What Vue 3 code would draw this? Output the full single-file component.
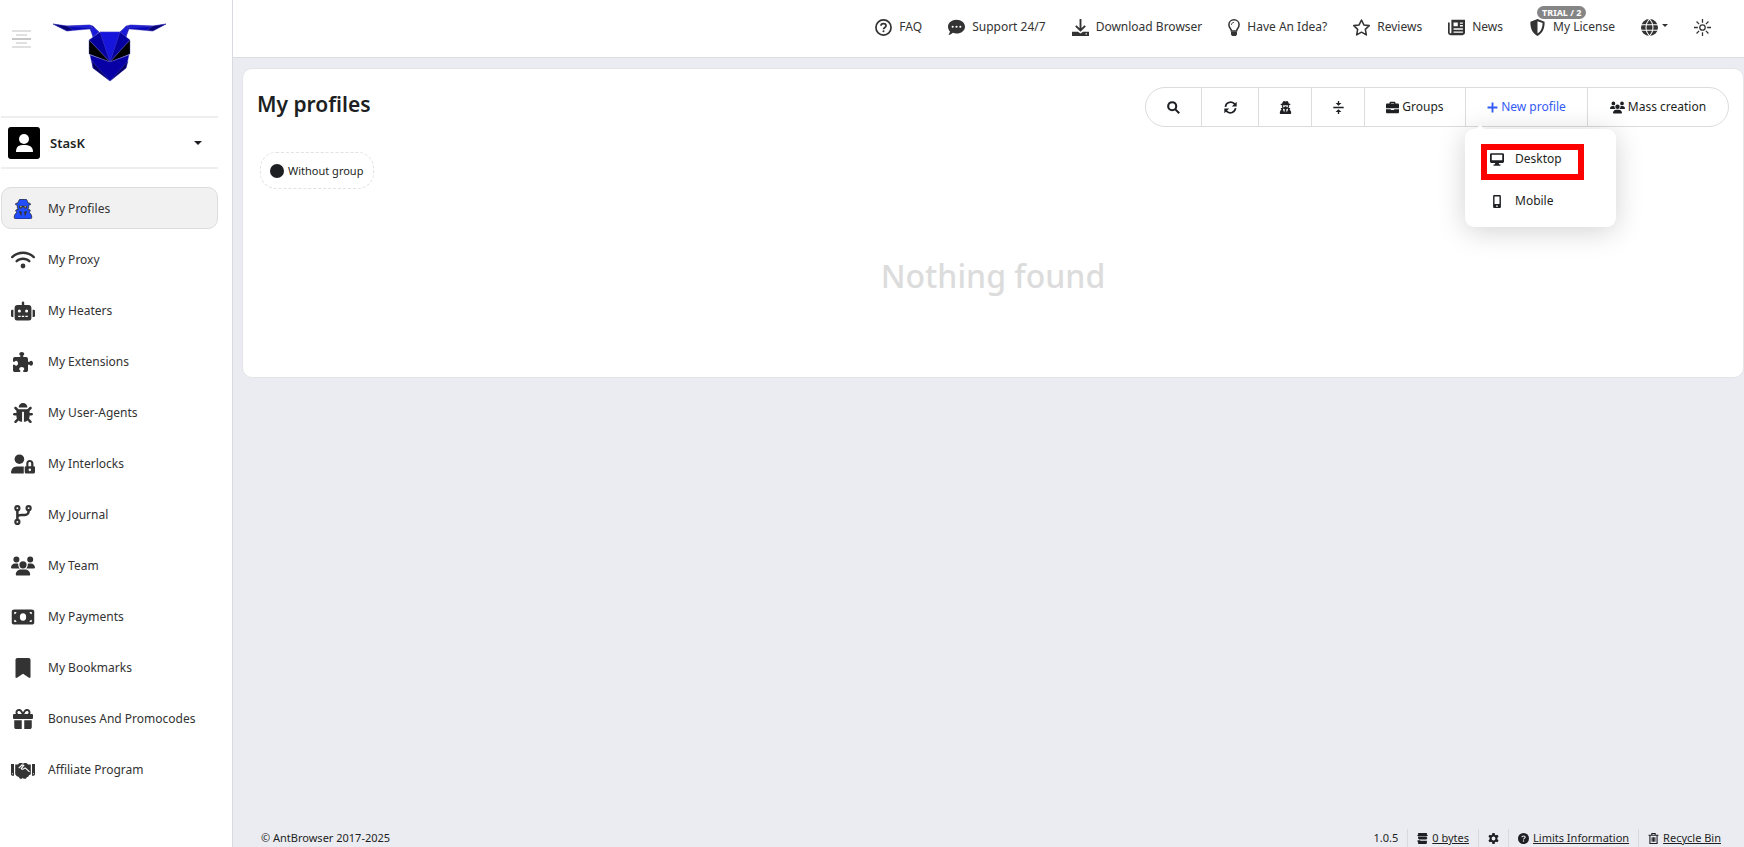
<script setup>
const icons = {
  wifi: ['0 0 640 512', '<path d="M54 203C123 137 217 96 320 96s197 41 266 107c13 12 33 12 45-1s12-33-1-45C550 80 440 32 320 32S90 80 10 157c-13 12-13 32-1 45s32 13 45 1zM320 256c57 0 109 21 148 56 13 12 34 10 45-3s10-33-2-45c-51-45-118-72-191-72s-140 27-191 72c-13 12-14 32-2 45s32 15 45 3c39-35 91-56 148-56zm64 160a64 64 0 1 0-128 0 64 64 0 1 0 128 0z"/>'],
  robot: ['0 0 640 512', '<path d="M32 224h32v192H32a32 32 0 0 1-32-32V256a32 32 0 0 1 32-32Zm512-48v272a64 64 0 0 1-64 64H160a64 64 0 0 1-64-64V176a80 80 0 0 1 80-80h112V32a32 32 0 0 1 64 0v64h112a80 80 0 0 1 80 80ZM264 256a40 40 0 1 0-40 40 40 40 0 0 0 40-40Zm-8 128h-64v32h64Zm96 0h-64v32h64Zm104-128a40 40 0 1 0-40 40 40 40 0 0 0 40-40Zm-8 128h-64v32h64Zm192-128v128a32 32 0 0 1-32 32h-32V224h32a32 32 0 0 1 32 32Z"/>'],
  puzzle: ['0 0 512 512', '<path d="M192 104.8c0-9.2-5.8-17.3-13.2-22.8C167.2 73.3 160 61.3 160 48c0-26.500 28.700-48 64-48s64 21.500 64 48c0 13.300-7.200 25.300-18.800 34c-7.400 5.500-13.200 13.600-13.200 22.800c0 12.800 10.400 23.200 23.200 23.200H336c26.500 0 48 21.500 48 48v56.800c0 12.800 10.400 23.200 23.200 23.200c9.200 0 17.300-5.800 22.800-13.200c8.700-11.600 20.700-18.800 34-18.800c26.500 0 48 28.700 48 64s-21.500 64-48 64c-13.300 0-25.300-7.200-34-18.800c-5.500-7.400-13.600-13.200-22.800-13.200c-12.800 0-23.200 10.400-23.200 23.200V464c0 26.500-21.500 48-48 48H279.200c-12.800 0-23.200-10.400-23.200-23.200c0-9.200 5.800-17.300 13.200-22.800c11.600-8.700 18.800-20.700 18.800-34c0-26.500-28.700-48-64-48s-64 21.500-64 48c0 13.300 7.200 25.300 18.800 34c7.400 5.500 13.200 13.600 13.200 22.800c0 12.800-10.400 23.200-23.200 23.200H48c-26.500 0-48-21.500-48-48V343.200C0 330.400 10.400 320 23.200 320c9.200 0 17.300 5.800 22.800 13.200C54.700 344.800 66.700 352 80 352c26.500 0 48-28.700 48-64s-21.500-64-48-64c-13.300 0-25.300 7.200-34 18.800C40.500 250.200 32.400 256 23.200 256C10.400 256 0 245.600 0 232.800V176c0-26.500 21.500-48 48-48H168.800c12.800 0 23.200-10.400 23.200-23.200z"/>'],
  bug: ['0 0 512 512', '<path d="M512 289c-1 17-15 31-33 31h-55v16c0 22-5 43-14 61l61 61c12 12 12 32 0 45s-33 12-46 0l-54-55c-25 20-57 32-91 32V236c0-7-5-12-12-12h-24c-7 0-12 5-12 12v244c-34 0-66-12-91-32l-54 55c-13 12-33 12-46 0s-12-33 0-45l61-61c-9-18-14-39-14-61v-16H33c-18 0-32-14-33-31 0-18 14-33 32-33h56v-59l-47-46c-12-13-12-33 0-46s33-12 46 0l54 55h230l54-55c13-12 33-12 46 0s12 33 0 46l-47 46v59h56c18 0 32 15 32 33zM257 0c-62 0-112 50-112 112h224C369 50 319 0 257 0z"/>'],
  lockuser: ['0 0 640 512', '<circle cx="224" cy="128" r="128"/><path d="M0 490c0-96 62-170 150-170h190v192H22c-12 0-22-8-22-22z"/><path fill-rule="evenodd" d="M500 150c-55 0-92 40-92 92v72c-26 0-42 12-42 38v120c0 24 16 40 40 40h194c24 0 40-16 40-40V352c0-26-16-38-42-38v-72c0-52-43-92-98-92zm-36 164v-72c0-24 14-38 36-38s38 14 38 38v72zm38 64a34 34 0 1 1 0 68 34 34 0 0 1 0-68z"/>'],
  branch: ['0 0 448 512', '<g fill="none" stroke="currentColor"><circle cx="80" cy="80" r="52" stroke-width="56"/><circle cx="368" cy="80" r="52" stroke-width="56"/><circle cx="80" cy="432" r="52" stroke-width="56"/><path stroke-width="64" d="M80 130v250M80 290c25-30 55-34 96-34h96c53 0 96-43 96-96v-30"/></g>'],
  team: ['0 0 640 512', '<path d="M144 0a80 80 0 1 1 0 160A80 80 0 1 1 144 0zM512 0a80 80 0 1 1 0 160A80 80 0 1 1 512 0zM0 299C0 240 48 192 107 192h42c16 0 31 4 45 10-1 7-2 14-2 22 0 38 17 73 43 96H21c-11 0-21-10-21-21zM405 320c26-23 43-58 43-96 0-8-1-15-2-22 14-6 29-10 45-10h42c59 0 107 48 107 107 0 11-10 21-21 21zM224 224a96 96 0 1 1 192 0 96 96 0 1 1-192 0zM128 485c0-73 60-133 133-133h118c73 0 133 60 133 133 0 15-12 27-27 27H155c-15 0-27-12-27-27z"/>'],
  money: ['0 0 576 512', '<path fill-rule="evenodd" d="M64 64C29 64 0 84 0 112v288c0 28 29 48 64 48h448c35 0 64-20 64-48V112c0-28-29-48-64-48zm0 320v-56c32 0 56 24 56 56zM64 184v-56h56c0 32-24 56-56 56zm448 144v56h-56c0-32 24-56 56-56zm0-144c-32 0-56-24-56-56h56zM288 160a80 96 0 1 1 0 192 80 96 0 0 1 0-192z"/>'],
  bookmark: ['0 0 384 512', '<path d="M0 48v440c0 13 11 24 24 24 5 0 10-1 14-4l154-108 154 108c4 3 9 4 14 4 13 0 24-11 24-24V48c0-26-22-48-48-48H48C22 0 0 22 0 48z"/>'],
  gift: ['0 0 512 512', '<path d="M190.500 68.800L225.300 128H152c-22 0-40-18-40-40s18-40 40-40h2c15 0 29 8 36.500 20.800zM64 88c0 14 3 28 10 40H32c-18 0-32 14-32 32v64c0 18 14 32 32 32h448c18 0 32-14 32-32v-64c0-18-14-32-32-32h-42c7-12 10-26 10-40 0-49-39-88-88-88h-2c-32 0-62 17-78 44l-24 41-24-41C216 17 186 0 154 0h-2c-49 0-88 39-88 88zm336 0c0 22-18 40-40 40h-73l34-59c8-13 22-21 37-21h2c22 0 40 18 40 40zM32 288v176c0 26 22 48 48 48h144V288zM288 512h144c26 0 48-22 48-48V288H288z"/>'],
  hands: ['0 0 640 512', '<path d="M0 96h80v310H36c-20 0-36-16-36-36zm560 0h80v274c0 20-16 36-36 36h-44z"/><path d="M112 110h70l48-44h54l36 20 36-20h54l48 44h70v260l-48 26-14 34-42 18-28 38h-58l-22-22-22 22h-54l-40-50-44-14-44-52z"/><path d="M206 206l88-84 46 10-66 86c22 28 52 24 80-8l32-6 108 104" fill="none" stroke="#fff" stroke-width="30"/><path d="M30 340h24v26H30zm556 0h24v26h-24z" fill="#fff"/>'],
  spy: ['0 0 448 512', '<path d="M224 16c20 0 40-16 64-16 28 0 50 50 64 100 42 8 68 18 68 30 0 14-22 24-52 32 8 58-4 82-24 110h42c24 0 30 18 20 38l-24 38c42 24 66 66 66 122 0 24-18 42-42 42H42c-24 0-42-18-42-42 0-56 24-98 66-122l-24-38c-10-20-4-38 20-38h42c-20-28-32-52-24-110-30-8-52-18-52-32 0-12 26-22 68-30C110 50 132 0 160 0c24 0 44 16 64 16z"/><path class="spy-cut" fill="#fff" d="M120 170h208v34c0 24-18 40-44 40-22 0-38-12-44-34h-32c-6 22-22 34-44 34-26 0-44-16-44-40zM146 300l52 30-24 120-50-116zm156 0-52 30 24 120 50-116z"/><path class="spy-lens" d="M142 188h48c-2 20-10 30-24 30s-24-10-24-30zm116 0h48c0 20-10 30-24 30s-22-10-24-30z"/>'],
  faq: ['0 0 20 20', '<circle cx="10" cy="10" r="8.900" fill="none" stroke="currentColor" stroke-width="2"/><path d="M7 8c0-3.500 6-3.500 6 0 0 2-3 2-3 4.200" fill="none" stroke="currentColor" stroke-width="2"/><circle cx="10" cy="14.500" r="1.200"/>'],
  chat: ['0 0 20 20', '<path fill-rule="evenodd" d="M10 1c5.600 0 10 3.600 10 8s-4.400 8-10 8c-1.500 0-3-.3-4.300-.8C4.300 17.500 2.600 18.600.4 18.600c1-1.100 1.700-2.500 1.900-4C.8 13 0 11 0 9c0-4.400 4.400-8 10-8zM5.500 7.800a1.200 1.200 0 1 0 0 2.500 1.200 1.200 0 0 0 0-2.500zm4.500 0a1.200 1.200 0 1 0 0 2.500 1.200 1.200 0 0 0 0-2.500zm4.500 0a1.200 1.200 0 1 0 0 2.500 1.200 1.200 0 0 0 0-2.500z"/>'],
  download: ['0 0 20 20', '<path d="M10 0v13M4.500 8l5.500 5.500L15.500 8" fill="none" stroke="currentColor" stroke-width="2.200"/><path fill-rule="evenodd" d="M0 15h7l3 2 3-2h7v5H0zm16 1.800v1.400h1.500v-1.400z"/>'],
  bulb: ['0 0 14 20', '<path d="M4 14c0-2-3-3.500-3-7.200C1 3.500 3.700 1 7 1s6 2.500 6 5.800c0 3.700-3 5.200-3 7.200z" fill="none" stroke="currentColor" stroke-width="1.800"/><path d="M3.500 15h7v3.500L9 20H5l-1.500-1.500z"/><path d="M4 7c0-2 1.200-3 3-3" fill="none" stroke="currentColor"/>'],
  star: ['0 0 20 20', '<path d="M10 1.200l2.800 5.800 6.300.8-4.600 4.400 1.200 6.500L10 15.500l-5.700 3.200 1.200-6.500L.9 7.800 7.200 7z" fill="none" stroke="currentColor" stroke-width="1.800" stroke-linejoin="round"/>'],
  news: ['0 0 20 20', '<path d="M4 1h16v15c0 1.700-1 3-3 3H3c-2 0-3-1.300-3-3V4h2v12c0 .6.300 1 1 1s1-.4 1-1z"/><path d="M6.500 4h5v4.500h-5zM14 4h3.500v1.700H14zM14 7h3.500v1.700H14zM6.500 11h11v1.500h-11zM6.500 14.600h11v1.500h-11z" fill="#fff"/>'],
  shield: ['0 0 18 20', '<path fill-rule="evenodd" d="M9 0l8.300 3.300c.4 6.700-1.800 13.300-8.300 16.700C2.500 16.600.3 10 .7 3.300zm0 2.500v14.700c4-2.500 6-7 6-12.400z"/>'],
  globe: ['0 0 20 20', '<circle cx="10" cy="10" r="10"/><path d="M0 6.700h20M0 13.300h20M10 0C4.500 6 4.500 14 10 20M10 0c5.500 6 5.500 14 0 20" fill="none" stroke="#fff" stroke-width="1.300"/>'],
  sun: ['0 0 20 20', '<g fill="none" stroke="currentColor" stroke-width="1.500"><circle cx="10" cy="10" r="3.200"/><path d="M10 0v4.500M10 15.500V20M0 10h4.500M15.500 10H20M3 3l3 3M14 14l3 3M3 17l3-3M14 6l3-3"/></g>'],
  search: ['0 0 20 20', '<g fill="none" stroke="currentColor" stroke-width="3.200"><circle cx="8" cy="8" r="6.200"/><path d="M12.500 12.500l6.300 6.300"/></g>'],
  sync: ['0 0 20 20', '<g fill="none" stroke="currentColor" stroke-width="2.600"><path d="M2.200 9a8 8 0 0 1 13.500-4.800L18 6.500M17.800 11a8 8 0 0 1-13.500 4.800L2 13.500"/></g><path d="M19.500 1v7.500H12zM.5 19v-7.500H8z"/>'],
  compress: ['0 0 20 20', '<path d="M2 9h16v2H2zM9 0h2v3h3.500L10 7.300 5.500 3H9zM9 20h2v-3h3.500L10 12.700 5.500 17H9z"/>'],
  brief: ['0 0 20 20', '<path fill-rule="evenodd" d="M5.500 4V2.500C5.500 1.500 6 1 7 1h6c1 0 1.500.5 1.500 1.500V4H18c1.200 0 2 .8 2 2v5H0V6c0-1.200.8-2 2-2zm2-1v1h5V3zM0 12.500h7.500V14h5v-1.500H20V17c0 1.200-.8 2-2 2H2c-1.200 0-2-.8-2-2z"/>'],
  plus: ['0 0 20 20', '<path d="M8.300 1h3.400v7.300H19v3.400h-7.300V19H8.300v-7.300H1V8.300h7.300z"/>'],
  desktop: ['0 0 20 18', '<path fill-rule="evenodd" d="M2 0h16c1.200 0 2 .8 2 2v10c0 1.200-.8 2-2 2h-5.500l.7 2H15v2H5v-2h1.800l.7-2H2c-1.200 0-2-.8-2-2V2C0 .8.800 0 2 0zm.5 2.300v7.700h15V2.300z"/>'],
  mobile: ['0 0 14 20', '<path fill-rule="evenodd" d="M3 0h8c1.200 0 2 .8 2 2v16c0 1.200-.8 2-2 2H3c-1.200 0-2-.8-2-2V2C1 .8 1.800 0 3 0zm.2 2.300V14h7.600V2.300zM7 15.700a1.300 1.300 0 1 0 0 2.600 1.300 1.300 0 0 0 0-2.600z"/>'],
  storage: ['0 0 20 20', '<path d="M2 0h16v3l2 1-2 2H2L0 4l2-1zM2 7h15l2 2-2 3H4l-2-2zM1 13h4l2 1h11v5l-2 1H2v-3l-1-1z"/>'],
  gear: ['0 0 20 20', '<path fill-rule="evenodd" d="M8 0h4l.6 3 1.700 1 2.900-1 2 3.400L17 8.500v3l2.200 2.100-2 3.400-2.900-1-1.700 1L12 20H8l-.6-3-1.700-1-2.900 1-2-3.400L3 11.500v-3L.8 6.400 2.800 3l2.900 1 1.700-1zM10 6.500a3.500 3.500 0 1 0 0 7 3.500 3.500 0 0 0 0-7z"/>'],
  help: ['0 0 20 20', '<circle cx="10" cy="10" r="10"/><path d="M7 7.800c0-3.300 6-3.300 6 0 0 2-3 2-3 4" fill="none" stroke="#ebecf1" stroke-width="2"/><circle cx="10" cy="14.500" r="1.300" fill="#ebecf1"/>'],
  trash: ['0 0 18 20', '<g fill="none" stroke="currentColor" stroke-width="2"><path d="M0 4h18M6 4V1h6v3M2.500 4v15h13V4M6.500 7.500v8.500M9 7.500v8.500M11.500 7.500v8.500"/></g>'],
}
const menu = [
  ['spy', 'My Profiles'], ['wifi', 'My Proxy'], ['robot', 'My Heaters'], ['puzzle', 'My Extensions'],
  ['bug', 'My User-Agents'], ['lockuser', 'My Interlocks'], ['branch', 'My Journal'], ['team', 'My Team'],
  ['money', 'My Payments'], ['bookmark', 'My Bookmarks'], ['gift', 'Bonuses And Promocodes'], ['hands', 'Affiliate Program'],
]
const links = [
  ['faq', 'FAQ'], ['chat', 'Support 24/7'], ['download', 'Download Browser'], ['bulb', 'Have An Idea?'],
  ['star', 'Reviews'], ['news', 'News'], ['shield', 'My License'],
]
const tools = [['search', 'Search'], ['sync', 'Refresh'], ['spy', 'Profile type'], ['compress', 'Collapse']]
</script>

<template>
  <div class="app">
    <aside class="side">
      <div class="brand">
        <button class="burger" aria-label="Toggle menu"><i /><i /><i /><i /><i /></button>
        <a href="#" class="logo" aria-label="AntBrowser">
          <svg viewBox="53 22 114 60">
            <g stroke="#4b4bc0" stroke-width=".4" stroke-linejoin="round">
              <path fill="#0a08b8" d="M53 24l14 2 23-1 3 1 6 6-6 5-3-8-23 2zM166 24l-13 2-23-1-4 1-6 6 6 5 3-8 23 2z" />
              <path fill="#1a18dc" d="M67 26l23-1 2 3zM153 26l-23-1-2 3zM91 26l8 6-6 5zM128 26l-8 6 6 5z" />
              <path fill="#050078" d="M53 24l14 2 6 4-6 1zM166 24l-13 2-6 4 6 1z" />
              <path fill="#0700a0" d="M100 32L89 40l21 22 20-22-10-8z" />
              <path fill="#1714dc" d="M100 32h20l-10 30z" />
              <path fill="#000" d="M89 40l21 22-21-8zM130 40l-20 22 20-8z" />
              <path fill="#0800a5" d="M90 55l20 7 19-7-3 13-16 13-17-13z" />
              <path fill="#050064" d="M92 61l18 20-17-13zM128 61l-18 20 16-13z" />
            </g>
          </svg>
        </a>
      </div>
      <button class="user">
        <span class="avatar"><svg viewBox="0 0 32 32"><circle cx="16" cy="12" r="5" /><path d="M8 25c0-6 3-7 8-7s9 1 9 7z" /></svg></span>
        <b>StasK</b><span class="caret" />
      </button>
      <nav class="menu">
        <a v-for="(m, i) in menu" :key="m[1]" href="#" :class="{ active: i === 0 }">
          <svg class="ic" :viewBox="icons[m[0]][0]" v-html="icons[m[0]][1]" /><span>{{ m[1] }}</span>
        </a>
      </nav>
    </aside>

    <div class="page">
      <header class="top">
        <a v-for="l in links" :key="l[1]" href="#" :class="{ slim: l[0] === 'bulb' }">
          <svg class="ic" :viewBox="icons[l[0]][0]" v-html="icons[l[0]][1]" />
          <span>{{ l[1] }}</span>
          <em v-if="l[0] === 'shield'" class="badge">TRIAL / 2</em>
        </a>
        <button class="lang" aria-label="Language"><svg class="ic" :viewBox="icons.globe[0]" v-html="icons.globe[1]" /><span class="caret" /></button>
        <button aria-label="Theme"><svg class="ic" :viewBox="icons.sun[0]" v-html="icons.sun[1]" /></button>
      </header>

      <main class="card">
        <div class="head">
          <h1>My profiles</h1>
          <div class="tools">
            <button v-for="t in tools" :key="t[0]" class="tool" :class="t[0]" :aria-label="t[1]">
              <svg :viewBox="icons[t[0]][0]" v-html="icons[t[0]][1]" />
            </button>
            <button class="groups"><svg :viewBox="icons.brief[0]" v-html="icons.brief[1]" />Groups</button>
            <div class="drop">
              <button class="new"><svg :viewBox="icons.plus[0]" v-html="icons.plus[1]" />New profile</button>
              <div class="pop">
                <a href="#"><svg :viewBox="icons.desktop[0]" v-html="icons.desktop[1]" />Desktop</a>
                <a href="#"><svg :viewBox="icons.mobile[0]" v-html="icons.mobile[1]" />Mobile</a>
                <span class="mark" />
              </div>
            </div>
            <button class="mass"><svg :viewBox="icons.team[0]" v-html="icons.team[1]" />Mass creation</button>
          </div>
        </div>
        <button class="group"><span class="dot" />Without group</button>
        <p class="empty">Nothing found</p>
      </main>

      <footer class="foot">
        <span>© AntBrowser 2017-2025</span>
        <div class="info">
          <span>1.0.5</span>
          <span><svg :viewBox="icons.storage[0]" v-html="icons.storage[1]" /><a href="#">0 bytes</a></span>
          <button aria-label="Settings"><svg :viewBox="icons.gear[0]" v-html="icons.gear[1]" /></button>
          <span><svg :viewBox="icons.help[0]" v-html="icons.help[1]" /><a href="#">Limits Information</a></span>
          <span class="bin"><svg :viewBox="icons.trash[0]" v-html="icons.trash[1]" /><a href="#">Recycle Bin</a></span>
        </div>
      </footer>
    </div>
  </div>
</template>

<style>
body { margin: 0; }
</style>

<style scoped>
.app { display: flex; min-height: 100vh; background: #ebecf1; color: #1d1f23; font: 12px/20px "Noto Sans", "Open Sans", sans-serif; }
.app * { box-sizing: border-box; }
button { border: 0; padding: 0; background: none; font: inherit; color: inherit; }
a { color: inherit; text-decoration: none; }
svg { fill: currentColor; flex: none; display: block; }
.side { width: 233px; flex: none; background: #fff; border-right: 1px solid #d9dadf; padding-right: 14px; }
.brand { height: 116px; display: flex; align-items: flex-start; padding: 22px 0 0 12px; }
.burger { width: 19px; display: flex; flex-direction: column; align-items: center; gap: 2px; margin-top: 8px; }
.burger i { width: 19px; height: 2px; background: #e0e0e0; }
.burger i:nth-child(even) { width: 11px; }
.burger i:nth-child(3) { background: #c8c8c8; }
.logo { margin-left: 22px; }
.logo svg { width: 114px; height: 60px; }
.user { width: 217px; height: 53px; margin-left: 1px; padding: 0 16px 0 7px; border: solid #eee; border-width: 2px 0; display: flex; align-items: center; gap: 10px; font-size: 13px; }
.user b { font-weight: 600; }
.avatar { width: 32px; height: 32px; border-radius: 3px; background: #000; color: #fff; }
.caret { border: 4px solid transparent; border-top-color: currentColor; border-bottom: 0; }
.user .caret { margin-left: auto; }
.menu { margin: 18px 0 0 1px; display: flex; flex-direction: column; gap: 9px; color: #333; }
.menu a { display: flex; align-items: center; gap: 13px; height: 42px; padding: 1px 0 0 9px; border: 1px solid transparent; border-radius: 10px; }
.menu .ic { width: 24px; height: 20px; }
.menu a.active { background: #f1f1f1; border-color: #ddd; }
.menu a.active .ic { color: #1f4dff; stroke: #222; stroke-width: 20px; }
.menu a.active :deep(.spy-cut) { fill: #333; stroke: none; }
.menu a.active :deep(.spy-lens) { fill: #b9b4a8; stroke: none; }
.page { flex: 1; min-width: 0; display: flex; flex-direction: column; }
.top { height: 58px; background: #fff; border-bottom: 1px solid #dcdde1; display: flex; justify-content: flex-end; align-items: center; gap: 26px; padding: 0 33px 3px 0; color: #333; }
.top a { position: relative; display: flex; align-items: center; gap: 7px; }
.top .ic { width: 17px; height: 17px; }
.top .slim .ic { width: 12px; }
.badge { position: absolute; left: 8px; top: -11px; background: #858585; color: #fff; border-radius: 7px; padding: 0 5px; font: bold 9px/13px "Noto Sans", sans-serif; white-space: nowrap; }
.lang { display: flex; align-items: center; gap: 4px; }
.lang .caret { border-width: 3px; border-bottom: 0; margin-top: -4px; }
.card { margin: 10px 0 0 9px; height: 310px; background: #fff; border: 1px solid #e4e4e8; border-radius: 10px; padding: 18px 14px 0; }
.head { display: flex; justify-content: space-between; align-items: flex-start; }
h1 { margin: 0; font: 600 21px/34px "Noto Sans", sans-serif; }
.tools { display: flex; height: 40px; border: 1px solid #dcdcdc; border-radius: 20px; }
.tools > * + * { border-left: 1px solid #dcdcdc; }
.tools button { display: flex; align-items: center; justify-content: center; gap: 3px; }
.tools svg { width: 13px; height: 13px; }
.tool { width: 57px; }
.tool.search { width: 55px; }
.tool.spy, .tool.compress { width: 53px; }
.groups { width: 101px; }
.drop { width: 122px; position: relative; display: flex; }
.new { width: 100%; color: #345bf5; }
.tools .new svg { width: 11px; height: 11px; }
.mass { width: 141px; border-radius: 0 20px 20px 0; }
.tools .mass svg { width: 15px; height: 13px; }
.pop { position: absolute; z-index: 2; left: -1px; top: 41px; width: 151px; height: 98px; padding: 9px 25px; background: #fff; border-radius: 9px; box-shadow: 0 4px 28px rgba(0, 0, 0, .18); }
.pop::before { content: ""; position: absolute; left: 10px; top: -4px; border: 5px solid transparent; border-top: 0; border-bottom-color: #fff; }
.pop a { display: flex; align-items: center; gap: 11px; height: 42px; }
.tools .pop svg { width: 14px; height: 13px; }
.mark { position: absolute; left: 16px; top: 15px; width: 103px; height: 36px; border: 6px solid #f00; }
.group { display: flex; align-items: center; gap: 4px; height: 37px; margin: 25px 0 0 3px; padding: 0 10px 0 9px; border: 1px dashed #e2e2e2; border-radius: 16px; font-size: 11px; }
.dot { width: 14px; height: 14px; border-radius: 50%; background: currentColor; }
.empty { margin: 63px 0 0; text-align: center; color: #dcdcdc; font: 500 32px/48px "Noto Sans", sans-serif; }
.foot { margin-top: auto; height: 18px; display: flex; align-items: center; justify-content: space-between; padding: 0 23px 0 28px; font-size: 11px; line-height: 18px; }
.info { display: flex; align-items: center; height: 18px; }
.info > * { display: flex; align-items: center; gap: 4px; padding: 0 9px; height: 18px; }
.info > * + * { border-left: 1px solid #d8d9de; }
.info > :last-child { padding-right: 0; }
.info svg { width: 11px; height: 11px; }
.info a { text-decoration: underline; }
</style>
